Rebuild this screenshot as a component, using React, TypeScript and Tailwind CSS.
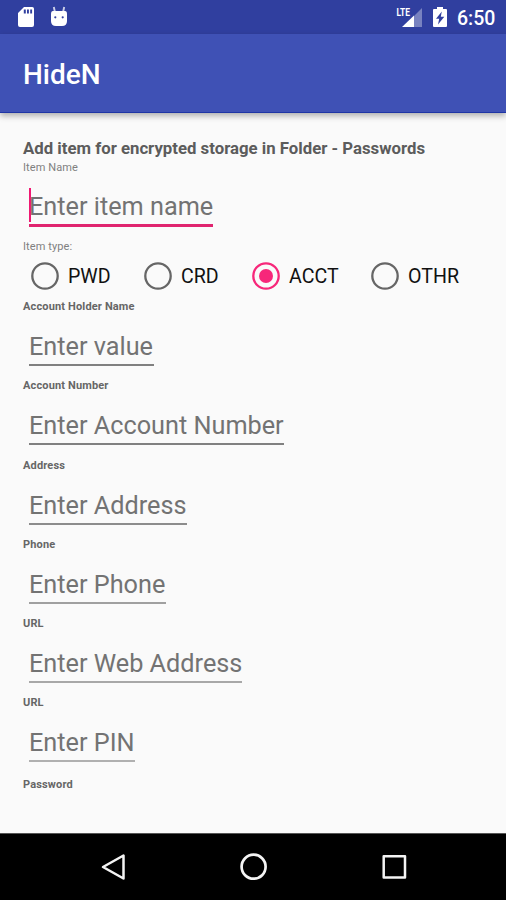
import React, { useState } from 'react'

const itemTypes = [
  { id: 'PWD', spacing: 'w-[113px]' },
  { id: 'CRD', spacing: 'w-[108px]' },
  { id: 'ACCT', spacing: 'w-[119px]' },
  { id: 'OTHR', spacing: 'w-[100px]' },
];

const fields = [
  { id: 1, label: 'Account Holder Name', hint: 'Enter value', width: 'w-[125px]', line: 'bg-[#808080]' },
  { id: 2, label: 'Account Number', hint: 'Enter Account Number', width: 'w-[255px]', line: 'bg-[#808080]' },
  { id: 3, label: 'Address', hint: 'Enter Address', width: 'w-[158px]', line: 'bg-[#8c8c8c]' },
  { id: 4, label: 'Phone', hint: 'Enter Phone', width: 'w-[137px]', line: 'bg-[#a0a0a0]' },
  { id: 5, label: 'URL', hint: 'Enter Web Address', width: 'w-[213px]', line: 'bg-[#a8a8a8]' },
  { id: 6, label: 'URL', hint: 'Enter PIN', width: 'w-[106px]', line: 'bg-[#b0b0b0]' },
];

function StatusBar() {
  return (
    <div className="h-[34px] bg-[#303f9f] flex items-center text-white">
      <svg className="ml-[17px]" width="18" height="22" viewBox="0 0 18 22">
        <path fill="currentColor" fillRule="evenodd" d="M7 1h8.2Q17 1 17 2.800V19q0 2-2 2H3q-2 0-2-2V7zM6.800 3.400v4h2v-4zm3.200 0v4h1.900v-4zm3.200 0v4h1.900v-4z" />
      </svg>
      <svg className="ml-[14px]" width="20" height="22" viewBox="0 0 20 22">
        <path d="M4.800 1l1 4.500M15.200 1l-1 4.500" stroke="currentColor" strokeWidth="1.900" opacity=".75" />
        <path fill="currentColor" d="M4 5h12q2 0 2 3v7q0 5-5 5H7q-5 0-5-5V8q0-3 2-3z" />
        <circle cx="6.300" cy="11.300" r="1.100" fill="#303f9f" />
        <circle cx="13.700" cy="11.300" r="1.100" fill="#303f9f" />
      </svg>
      <div className="ml-auto flex items-center">
        <svg width="28" height="22" viewBox="0 0 28 22">
          <path fill="currentColor" opacity=".35" d="M26 2v19H18V10z" />
          <path fill="currentColor" d="M18 9.500V21H6z" />
          <text x="0.500" y="10" fontSize="11.500" fontWeight="700" textLength="13.500" lengthAdjust="spacingAndGlyphs" fill="currentColor" fontFamily="Roboto, sans-serif">LTE</text>
        </svg>
        <svg className="ml-[9px]" width="14" height="22" viewBox="0 0 14 22">
          <path fill="currentColor" fillRule="evenodd" d="M4 1h6v2h3q1 0 1 1v16q0 1-1 1H1q-1 0-1-1V4q0-1 1-1h3zM8.800 5.500L3 12.800h3.200L5 18.500l6.300-7.800H7.800z" />
        </svg>
        <span className="ml-[10px] mr-[10px] mt-[3px] w-[39px] text-[19.500px] leading-[31px] font-medium whitespace-nowrap">6:50</span>
      </div>
    </div>
  )
}

function RadioIcon({ checked }: { checked: boolean }) {
  return (
    <svg width="28" height="28" viewBox="0 0 28 28" className={checked ? 'text-[#f7277a]' : 'text-[#666666]'}>
      <circle cx="14" cy="14" r="12.700" fill="none" stroke="currentColor" strokeWidth="2.300" />
      {checked && <circle cx="14" cy="14" r="7" fill="currentColor" />}
    </svg>
  )
}

function NavigationBar() {
  return (
    <div className="h-[67px] shrink-0 bg-black border-t border-[#555555] flex justify-between pl-[100px] pr-[98px] pt-[18px] text-[#f4f4f4]">
      <svg width="28" height="30" viewBox="0 0 28 30" fill="none" stroke="currentColor" strokeWidth="2.500" strokeLinejoin="round">
        <path d="M23.500 3.500v23L3 15z" />
      </svg>
      <svg width="28" height="30" viewBox="0 0 28 30" fill="none" stroke="currentColor" strokeWidth="2.700">
        <circle cx="13.600" cy="14.700" r="12" />
      </svg>
      <svg width="28" height="30" viewBox="0 0 28 30" fill="none" stroke="currentColor" strokeWidth="2.500" strokeLinejoin="round">
        <rect x="3.700" y="4.200" width="21.300" height="21.300" />
      </svg>
    </div>
  )
}

export default function App() {

  const [itemType, setItemType] = useState('ACCT');

  return (
    <div className="w-[506px] h-[900px] flex flex-col overflow-hidden bg-[#fafafa] font-[Roboto,sans-serif] text-[#666666]">
      <StatusBar />
      <div className="h-[79px] shrink-0 flex items-center pl-[23px] pt-[4px] bg-[#3f51b5] border-b border-[#1f35a5] shadow-[0_3px_6px_rgba(0,0,0,0.3)]">
        <h1 className="text-[28px] leading-[32px] font-medium text-white">HideN</h1>
      </div>

      <div className="flex-1 pl-[23px] pt-[25px]">
        <h2 className="h-[23px] text-[16.780px] leading-[20px] font-bold text-[#5c5c5c] whitespace-nowrap">
          Add item for encrypted storage in Folder - Passwords
        </h2>
        <div className="h-[79px]">
          <p className="text-[11px] leading-[14px] tracking-[0.1px] text-[#808080]">Item Name</p>
          <div className="ml-[6px] mt-[6px] w-[184px] h-[46px] border-b-[3px] border-[#e0246f] flex items-start">
            <span className="mt-[7px] h-[34px] w-[2px] -mr-[2px] shrink-0 bg-[#f01872]" />
            <span className="mt-[11px] text-[25.250px] leading-[30px] whitespace-nowrap text-[#737373]">Enter item name</span>
          </div>
        </div>

        <p className="text-[11px] leading-[14px] tracking-[0.1px] text-[#808080]">Item type:</p>
        <div className="h-[46px] pt-[7px] pl-[8px] flex">
          {itemTypes.map((type) => (
            <button
              key={type.id}
              className={`${type.spacing} h-[30px] shrink-0 flex items-center text-[19.600px] text-[#111111]`}
              onClick={() => setItemType(type.id)}
            >
              <RadioIcon checked={itemType === type.id} />
              <span className="ml-[9px] pt-[2px]">{type.id}</span>
            </button>
          ))}
        </div>

        {fields.map((field) => (
          <div key={field.id} className="h-[79.300px]">
            <p className="text-[11px] leading-[14px] tracking-[0.150px] font-bold text-[#666666]">{field.label}</p>
            <div className={`${field.width} ml-[6px] h-[52px] flex flex-col justify-between`}>
              <span className="mt-[18px] text-[25.250px] leading-[30px] whitespace-nowrap text-[#737373]">{field.hint}</span>
              <span className={`${field.line} h-[2px] shrink-0`} />
            </div>
          </div>
        ))}
        <p className="mt-[2px] text-[11px] leading-[14px] tracking-[0.150px] font-bold text-[#666666]">Password</p>
      </div>

      <NavigationBar />
    </div>
  )
}
